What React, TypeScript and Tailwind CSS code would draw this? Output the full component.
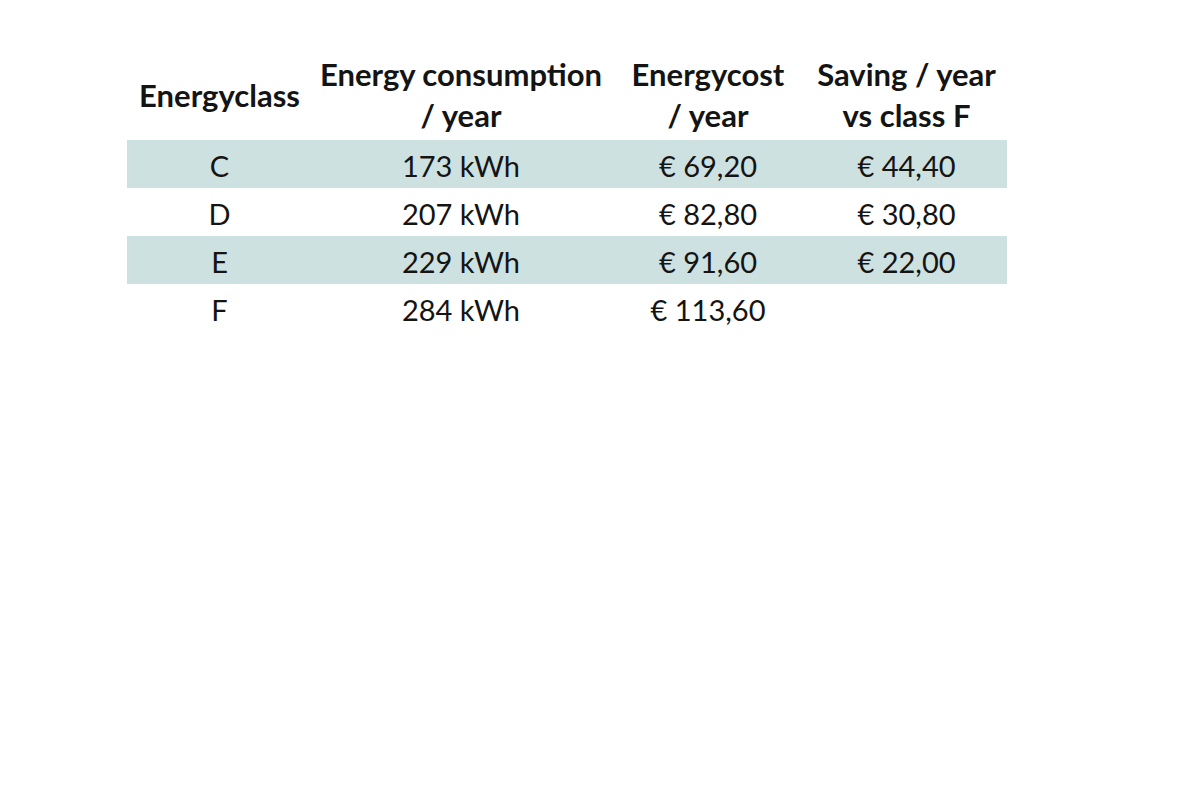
import React from "react";

const rows = [
  { c: "C", e: "173 kWh", cost: "€ 69,20", s: "€ 44,40", band: true },
  { c: "D", e: "207 kWh", cost: "€ 82,80", s: "€ 30,80", band: false },
  { c: "E", e: "229 kWh", cost: "€ 91,60", s: "€ 22,00", band: true },
  { c: "F", e: "284 kWh", cost: "€ 113,60", s: "", band: false },
];

export default function App() {
  return (
    <div className="w-[1200px] h-[800px] bg-white text-[#141414]" style={{ fontFamily: "Lato, 'Open Sans', sans-serif" }}>
      <div className="pt-[54px] pl-[127px]">
        <div className="w-[880px]">
          <div className="grid grid-cols-[185px_298px_196px_201px] font-bold text-[31px] leading-[41px] text-center">
            <div className="flex items-center justify-center">Energyclass</div>
            <div>Energy consumption<br />/ year</div>
            <div>Energycost<br />/ year</div>
            <div>Saving / year<br />vs class F</div>
          </div>
          <div className="mt-[4px]">
            {rows.map((r) => (
              <div
                key={r.c}
                className={`grid grid-cols-[185px_298px_196px_201px] h-[48px] items-center text-center text-[29px] leading-[48px] pt-[2px] ${r.band ? "bg-[#cde1e1]" : ""}`}
              >
                <div>{r.c}</div>
                <div>{r.e}</div>
                <div>{r.cost}</div>
                <div>{r.s}</div>
              </div>
            ))}
          </div>
        </div>
      </div>
    </div>
  );
}
